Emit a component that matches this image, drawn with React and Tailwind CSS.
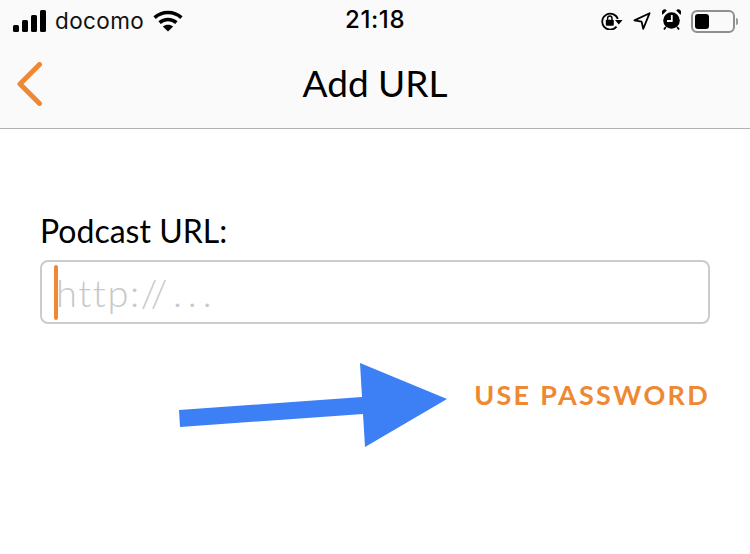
import React from "react";

function Signal() {
  return (
    <svg width="33" height="22" viewBox="0 0 33 22" fill="#000">
      <rect x="0" y="15" width="6" height="7" rx="1.5" />
      <rect x="9" y="10" width="6" height="12" rx="1.5" />
      <rect x="18" y="5" width="6" height="17" rx="1.5" />
      <rect x="27" y="0" width="6" height="22" rx="1.5" />
    </svg>
  );
}

function Wifi() {
  return (
    <svg width="30" height="22" viewBox="0 0 30 22" fill="none" stroke="#000" strokeWidth="3.6">
      <path d="M1.6 7.6C9 .8 21 .8 28.4 7.6" />
      <path d="M6.6 12.6C11.4 8.4 18.6 8.4 23.4 12.6" />
      <path d="M15 21.5L9.8 16.6C12.8 14.2 17.2 14.2 20.2 16.6Z" fill="#000" stroke="none" />
    </svg>
  );
}

function RotationLock() {
  return (
    <svg width="22" height="18" viewBox="0 0 22 18" fill="none">
      <path d="M15.5 14.6A8 8 0 1 1 16.8 7" stroke="#000" strokeWidth="1.8" />
      <path d="M14 8L21.5 8L17.8 12.5Z" fill="#000" />
      <rect x="4.8" y="7.8" width="8" height="6" rx="1" fill="#000" />
      <path d="M6.6 8V6.2a2.2 2.2 0 0 1 4.4 0V8" stroke="#000" strokeWidth="1.4" />
    </svg>
  );
}

function Location() {
  return (
    <svg width="18" height="18" viewBox="0 0 18 18" fill="none">
      <path d="M16.6 1.2L1.4 8.4L8.6 9.6L10.2 16.8Z" stroke="#000" strokeWidth="1.8" strokeLinejoin="round" />
    </svg>
  );
}

function Alarm() {
  return (
    <svg width="19" height="21" viewBox="0 0 19 21">
      <circle cx="9.5" cy="11.5" r="8.3" fill="#000" />
      <path d="M0.6 5.8L4.8 1.4A2.9 2.9 0 0 0 .6 5.8Z" fill="#000" />
      <path d="M18.4 5.8L14.2 1.4A2.9 2.9 0 0 1 18.4 5.8Z" fill="#000" />
      <path d="M9.8 6V12H5" fill="none" stroke="#fafafa" strokeWidth="1.8" />
      <path d="M3.8 18L2 20.5M15.2 18L17 20.5" stroke="#000" strokeWidth="1.8" />
    </svg>
  );
}

function Battery() {
  return (
    <div className="flex items-center gap-[1px]">
      <div className="flex h-[23px] w-[44px] items-stretch rounded-[6px] border-2 border-[#8f8f8f] p-[2px]">
        <div className="w-[14px] rounded-[3px] bg-black" />
      </div>
      <div className="h-[7px] w-[2px] rounded-r-full bg-[#9a9a9a]" />
    </div>
  );
}

function App() {
  return (
    <div className="relative h-[554px] w-[750px] overflow-hidden bg-white font-['Lato',sans-serif] text-black">
      <header className="h-[129px] border-b border-[#b2b2b2] bg-[#fafafa]">
        <div className="relative flex h-[42px] items-center justify-between pl-[13px] pr-[12px] font-['Inter',sans-serif]">
          <div className="flex items-center">
            <Signal />
            <span className="ml-[9px] text-[22.5px] leading-none tracking-[0.4px] text-[#111]">docomo</span>
            <span className="ml-[9px]"><Wifi /></span>
          </div>
          <span className="absolute left-[345px] top-[7px] text-[24px] font-medium leading-[26px] tracking-[0.6px]">21:18</span>
          <div className="flex items-center">
            <RotationLock />
            <span className="ml-[10px]"><Location /></span>
            <span className="ml-[11px] -mt-[3px]"><Alarm /></span>
            <span className="ml-[10px]"><Battery /></span>
          </div>
        </div>
        <div className="relative flex h-[86px] items-center justify-center pb-[5px]">
          <svg className="absolute left-[17px] top-[20px]" width="26" height="44" viewBox="0 0 26 44" fill="none">
            <path d="M22.5 2.5L3 22L22.5 41.5" stroke="#ee8833" strokeWidth="5" strokeLinecap="round" strokeLinejoin="round" />
          </svg>
          <h1 className="text-[37px] font-normal leading-none">Add URL</h1>
        </div>
      </header>

      <main className="px-[40px] pt-[84px]">
        <label className="block text-[32px] leading-[36px]">Podcast URL:</label>
        <div className="mt-[11px] flex h-[64px] w-[670px] items-center rounded-[8px] border-2 border-[#cccccc] pl-[12px]">
          <span className="h-[55px] w-[4px] rounded-full bg-[#ee8833]" />
          <span className="-ml-[2px] text-[38px] font-light leading-none tracking-[1.6px] text-[#c8c8c8]">
            http://<span className="ml-[4px] tracking-[6px]">...</span>
          </span>
        </div>
        <div className="mt-[56px] flex justify-end">
          <span className="text-[27px] font-bold leading-[30px] tracking-[2.3px] text-[#ee8833]">USE PASSWORD</span>
        </div>
      </main>

      <svg className="absolute left-0 top-0" width="750" height="554" viewBox="0 0 750 554">
        <path d="M179 410L362 397L360 363L447 399L365 447L363 414L180 427Z" fill="#3d7ff4" />
      </svg>
    </div>
  );
}

export default App;
